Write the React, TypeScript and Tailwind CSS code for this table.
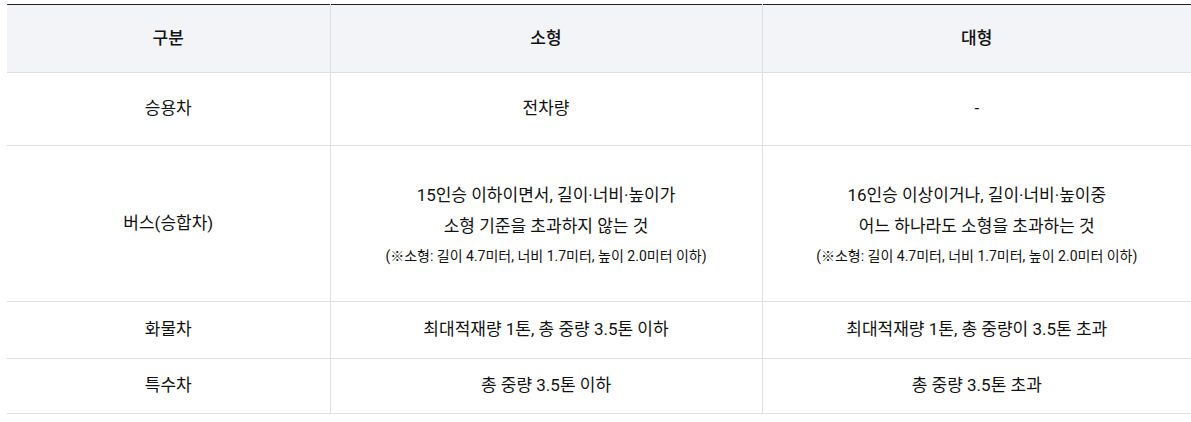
import React from 'react';

interface Row {
  label: string;
  small: React.ReactNode;
  large: React.ReactNode;
  height: string;
}

const note = '(※소형: 길이 4.7미터, 너비 1.7미터, 높이 2.0미터 이하)';

const rows: Row[] = [
  { label: '승용차', small: '전차량', large: '-', height: 'h-[73px]' },
  {
    label: '버스(승합차)',
    small: (
      <>
        <p className="leading-[31px]">15인승 이하이면서, 길이·너비·높이가</p>
        <p className="leading-[31px]">소형 기준을 초과하지 않는 것</p>
        <p className="mt-[2px] text-[14px] leading-[24px]">{note}</p>
      </>
    ),
    large: (
      <>
        <p className="leading-[31px]">16인승 이상이거나, 길이·너비·높이중</p>
        <p className="leading-[31px]">어느 하나라도 소형을 초과하는 것</p>
        <p className="mt-[2px] text-[14px] leading-[24px]">{note}</p>
      </>
    ),
    height: 'h-[156px]',
  },
  { label: '화물차', small: '최대적재량 1톤, 총 중량 3.5톤 이하', large: '최대적재량 1톤, 총 중량이 3.5톤 초과', height: 'h-[57px]' },
  { label: '특수차', small: '총 중량 3.5톤 이하', large: '총 중량 3.5톤 초과', height: 'h-[55px]' },
];

const App: React.FC = () => {
  return (
    <div className="w-[1191px] h-[422px] bg-white pl-[7px] pt-[4px] font-['Roboto','Noto_Sans_CJK_KR',sans-serif] text-[17px] text-[#111]">
      <table className="w-full border-collapse table-fixed border-t border-t-[#222]">
        <colgroup>
          <col className="w-[323px]" />
          <col className="w-[432px]" />
          <col />
        </colgroup>
        <thead>
          <tr className="h-[68px] bg-[#f3f4f8] text-[#111]">
            <th className="font-medium border-b border-r border-[#dddfe2] align-middle">구분</th>
            <th className="font-medium border-b border-r border-[#dddfe2] align-middle">소형</th>
            <th className="font-medium border-b border-[#dddfe2] align-middle">대형</th>
          </tr>
        </thead>
        <tbody>
          {rows.map((row) => (
            <tr key={row.label} className={row.height}>
              <td className="text-center align-middle border-b border-r border-[#dddfe2]">{row.label}</td>
              <td className="text-center align-middle border-b border-r border-[#dddfe2]">{row.small}</td>
              <td className="text-center align-middle border-b border-[#dddfe2]">{row.large}</td>
            </tr>
          ))}
        </tbody>
      </table>
    </div>
  );
};

export default App;
